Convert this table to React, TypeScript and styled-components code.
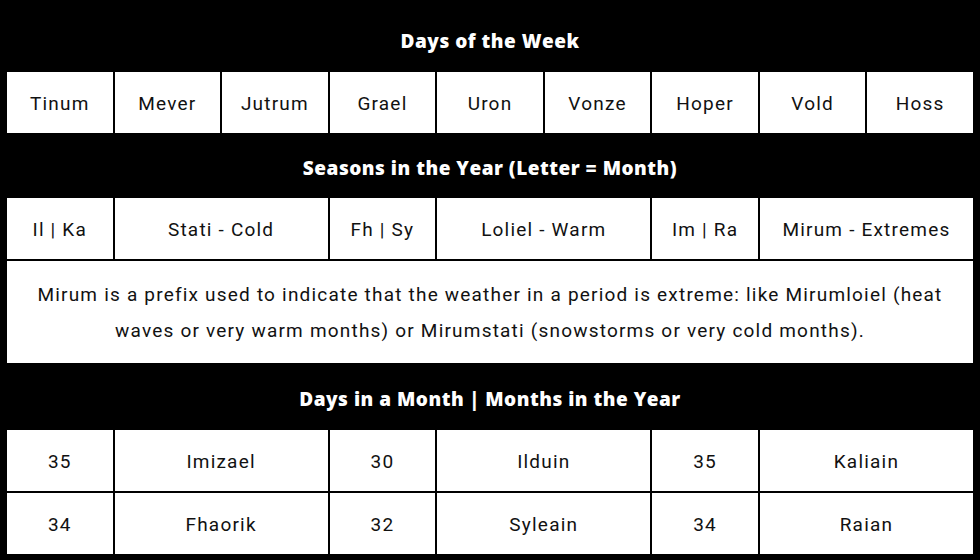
import styled, { createGlobalStyle } from 'styled-components';

const GlobalStyle = createGlobalStyle`
  html, body {
    margin: 0;
    padding: 0;
    background: #000;
  }
  body {
    font-family: Roboto, 'Liberation Sans', sans-serif;
  }
`;

const CalendarTable = styled.div`
  width: 980px;
  box-sizing: border-box;
  padding: 7px 7px 8px;
  background: #000;
  display: grid;
  grid-template-columns: repeat(9, 1fr);
  gap: 2px;
`;

const HeaderCell = styled.div<{ $height: number }>`
  grid-column: 1 / -1;
  height: ${(p) => p.$height}px;
  padding-top: 4px;
  box-sizing: border-box;
  display: flex;
  justify-content: center;
  align-items: center;
  color: #fff;
  font-family: 'Open Sans', Roboto, sans-serif;
  font-size: 19px;
  font-weight: 800;
  letter-spacing: 0.5px;
`;

const Cell = styled.div<{ $span?: number }>`
  grid-column: span ${(p) => p.$span ?? 1};
  height: 61px;
  padding-top: 2px;
  box-sizing: border-box;
  display: flex;
  justify-content: center;
  align-items: center;
  background: #fff;
  color: #111;
  font-size: 19px;
  letter-spacing: 1.2px;
`;

const NoteCell = styled.div`
  grid-column: 1 / -1;
  background: #fff;
  color: #111;
  font-size: 19px;
  letter-spacing: 1.2px;
  line-height: 36px;
  text-align: center;
  padding: 16px 8px 14px;
`;

const weekDays = ['Tinum', 'Mever', 'Jutrum', 'Grael', 'Uron', 'Vonze', 'Hoper', 'Vold', 'Hoss'];

const seasons: [string, number][] = [
  ['Il | Ka', 1],
  ['Stati - Cold', 2],
  ['Fh | Sy', 1],
  ['Loliel - Warm', 2],
  ['Im | Ra', 1],
  ['Mirum - Extremes', 2],
];

const months: [string, string][][] = [
  [
    ['35', 'Imizael'],
    ['30', 'Ilduin'],
    ['35', 'Kaliain'],
  ],
  [
    ['34', 'Fhaorik'],
    ['32', 'Syleain'],
    ['34', 'Raian'],
  ],
];

const App = () => {
  return (
    <>
      <GlobalStyle />
      <CalendarTable>
        <HeaderCell $height={63}>Days of the Week</HeaderCell>
        {weekDays.map((d) => (
          <Cell key={d}>{d}</Cell>
        ))}

        <HeaderCell $height={61}>Seasons in the Year (Letter = Month)</HeaderCell>
        {seasons.map(([label, span]) => (
          <Cell key={label} $span={span}>
            {label}
          </Cell>
        ))}

        <NoteCell>
          Mirum is a prefix used to indicate that the weather in a period is extreme: like Mirumloiel (heat
          waves or very warm months) or Mirumstati (snowstorms or very cold months).
        </NoteCell>

        <HeaderCell $height={63}>Days in a Month | Months in the Year</HeaderCell>
        {months.map((row, i) =>
          row.map(([days, name], j) => [
            <Cell key={`${i}-${j}-d`}>{days}</Cell>,
            <Cell key={`${i}-${j}-n`} $span={2}>
              {name}
            </Cell>,
          ])
        )}
      </CalendarTable>
    </>
  );
};

export default App;
